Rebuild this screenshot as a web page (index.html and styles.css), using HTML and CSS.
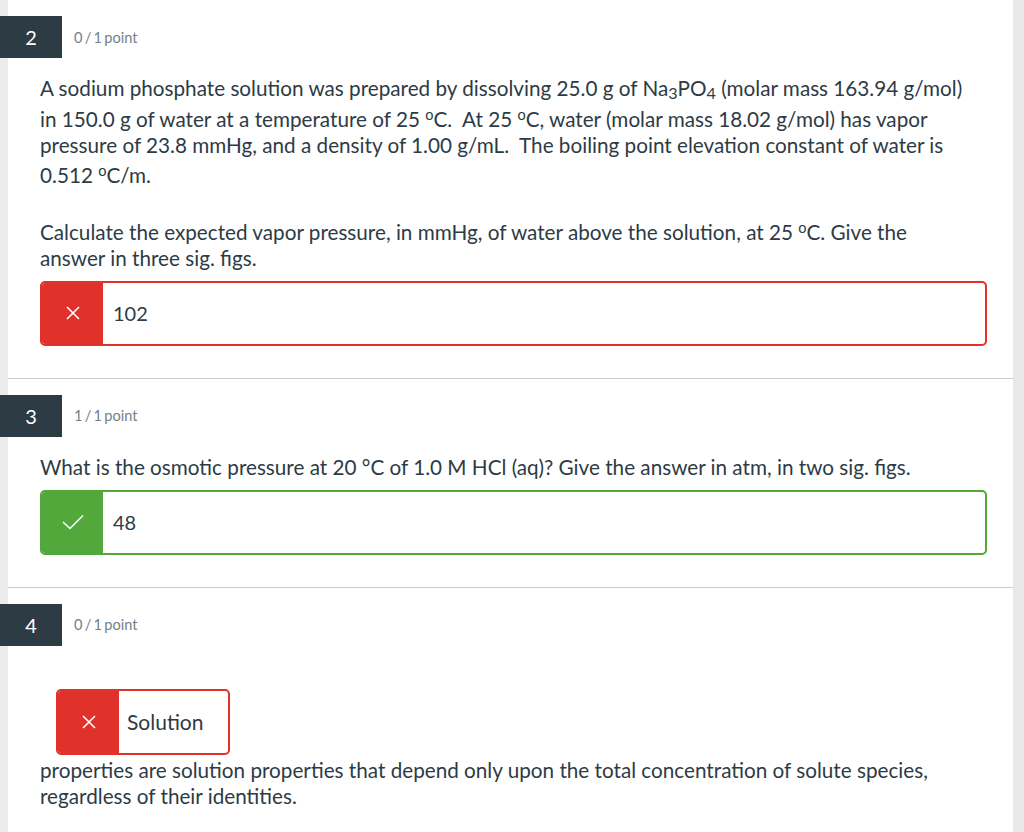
FILE: index.html
```html
<!DOCTYPE html>
<html>
<head>
<meta charset="utf-8">
<link rel="stylesheet" href="styles.css">
</head>
<body>
<div class="page">
  <section class="question">
    <div class="q-header">
      <div class="q-num">2</div>
      <div class="q-points">0 / 1 point</div>
    </div>
    <div class="q-body">
      <p>A sodium phosphate solution was prepared by dissolving 25.0 g of Na<sub>3</sub>PO<sub>4</sub> (molar mass 163.94 g/mol) in 150.0 g of water at a temperature of 25 <sup>o</sup>C.&nbsp; At 25 <sup>o</sup>C, water (molar mass 18.02 g/mol) has vapor pressure of 23.8 mmHg, and a density of 1.00 g/mL.&nbsp; The boiling point elevation constant of water is 0.512 <sup>o</sup>C/m.</p>
      <p>Calculate the expected vapor pressure, in mmHg, of water above the solution, at 25 <sup>o</sup>C. Give the answer in three sig. figs.</p>
    </div>
    <div class="answer wrong">
      <div class="answer-icon">
        <svg width="16" height="16" viewBox="0 0 16 16"><path d="M2 2 L14 14 M14 2 L2 14" stroke="#fff" stroke-width="1.6" fill="none"/></svg>
      </div>
      <div class="answer-text">102</div>
    </div>
  </section>

  <section class="question">
    <div class="q-header">
      <div class="q-num">3</div>
      <div class="q-points">1 / 1 point</div>
    </div>
    <div class="q-body">
      <p>What is the osmotic pressure at 20 °C of 1.0 M HCl (aq)? Give the answer in atm, in two sig. figs.</p>
    </div>
    <div class="answer right">
      <div class="answer-icon">
        <svg width="24" height="18" viewBox="0 0 24 18"><path d="M2 9 L9 15.5 L22 2.5" stroke="#fff" stroke-width="1.6" fill="none"/></svg>
      </div>
      <div class="answer-text">48</div>
    </div>
  </section>

  <section class="question last">
    <div class="q-header">
      <div class="q-num">4</div>
      <div class="q-points">0 / 1 point</div>
    </div>
    <div class="q-body inline-body">
      <div class="answer wrong inline">
        <div class="answer-icon">
          <svg width="16" height="16" viewBox="0 0 16 16"><path d="M2 2 L14 14 M14 2 L2 14" stroke="#fff" stroke-width="1.6" fill="none"/></svg>
        </div>
        <div class="answer-text">Solution</div>
      </div>
      <p class="after">properties are solution properties that depend only upon the total concentration of solute species, regardless of their identities.</p>
    </div>
  </section>
</div>
</body>
</html>
```

FILE: styles.css
```css
html, body {
  margin: 0;
  padding: 0;
}
body {
  font-family: Lato, "Liberation Sans", sans-serif;
  color: #2d3b45;
  height: 832px;
  overflow: hidden;
  background: linear-gradient(to right, #ececec 0, #ececec 8px, #ffffff 8px, #ffffff 1013px, #e9e9e9 1013px);
}
.page {
  margin: 0 11px 0 8px;
  min-height: 832px;
  background: #ffffff;
}
.question {
  border-bottom: 1px solid #c7cdd1;
  padding: 16px 26px 32px 32px;
}
.question.last {
  border-bottom: none;
}
.q-header {
  display: flex;
  align-items: center;
  margin-left: -40px;
}
.q-num {
  width: 62px;
  height: 42px;
  background: #2d3b45;
  color: #ffffff;
  font-size: 20px;
  display: flex;
  align-items: center;
  justify-content: center;
}
.q-points {
  margin-left: 12px;
  font-size: 14.6px;
  color: #73818c;
  word-spacing: -1.5px;
}
.q-body {
  font-size: 20.7px;
  line-height: 26px;
  margin-top: 17px;
}
.q-body p {
  margin: 0 0 26px 0;
  padding-right: 12px;
}
.q-body p:last-child {
  margin-bottom: 10px;
}
sub {
  font-size: 78%;
  line-height: 18px;
  vertical-align: -0.2em;
}
sup {
  font-size: 70%;
  line-height: 26px;
  vertical-align: 0.5em;
}
.answer {
  display: flex;
  height: 65px;
  box-sizing: border-box;
  border: 2px solid;
  border-radius: 5px;
  overflow: hidden;
}
.answer.wrong {
  border-color: #e0312b;
}
.answer.right {
  border-color: #52a83a;
}
.answer-icon {
  width: 61px;
  display: flex;
  align-items: center;
  justify-content: center;
}
.answer.wrong .answer-icon {
  background: #e0312b;
}
.answer.right .answer-icon {
  background: #52a83a;
}
.answer-text {
  display: flex;
  align-items: center;
  padding-left: 10px;
  font-size: 20px;
}
.inline-body {
  margin-top: 43px;
}
.answer.inline {
  width: 174px;
  height: 66px;
  margin-left: 16px;
}
.answer.inline .answer-text {
  font-size: 21px;
  padding-left: 8px;
}
.q-body p.after {
  margin: 2px 0 0 0;
}
```
